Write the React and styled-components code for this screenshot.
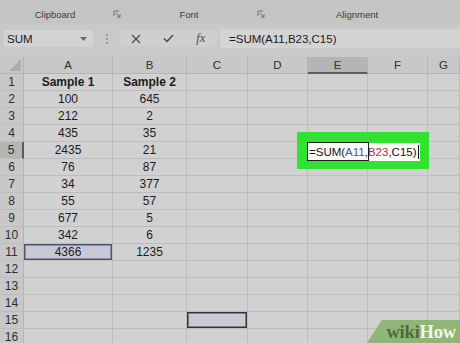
import React from "react";
import styled, { createGlobalStyle, css } from "styled-components";

const GlobalStyle = createGlobalStyle`
  html, body { margin: 0; padding: 0; background: #c9c9c9; }
  body { font-family: "Liberation Sans", Arial, sans-serif; }
  * { box-sizing: border-box; }
`;

const Page = styled.div`
  position: relative;
  width: 460px;
  height: 343px;
  overflow: hidden;
  background: #c9c9c9;
  color: #1e1e1e;
`;

const Ribbon = styled.div`
  display: flex;
  height: 24px;
  background: #c5c5c5;
`;

const RibbonGroup = styled.div`
  display: flex;
  align-items: center;
  width: ${(p) => p.$w}px;
  flex: ${(p) => (p.$grow ? 1 : "none")};
  padding-top: 4px;
`;

const GroupLabel = styled.span`
  flex: 1;
  text-align: center;
  font-size: 9.5px;
  color: #3c3c3c;
`;

const LauncherBox = styled.span`
  width: 14px;
  display: flex;
  justify-content: center;
`;

const Launcher = () => (
  <LauncherBox>
    <svg width="8" height="8" viewBox="0 0 8 8" fill="none" stroke="#6a6a6a" strokeWidth="1">
      <path d="M1 6V1H6" />
      <path d="M3 3L6.8 6.8" />
      <path d="M7 4V7H4" />
    </svg>
  </LauncherBox>
);

const FormulaBar = styled.div`
  display: flex;
  align-items: center;
  height: 33px;
  padding: 6px 0 10px 4px;
`;

const NameBox = styled.div`
  width: 89px;
  height: 17px;
  display: flex;
  align-items: center;
  justify-content: space-between;
  padding: 0 6px 0 3px;
  background: #d3d3d3;
  font-size: 11.5px;
  color: #1a1a1a;
`;

const Grip = styled.div`
  width: 27px;
  display: flex;
  flex-direction: column;
  align-items: center;
  gap: 2px;
  & > i {
    display: block;
    width: 2px;
    height: 2px;
    background: #9c9c9c;
  }
`;

const FuncBox = styled.div`
  width: 97px;
  height: 17px;
  display: flex;
  align-items: center;
  background: #cfcfcf;
`;

const FuncSlot = styled.span`
  flex: 1;
  display: flex;
  justify-content: center;
  align-items: center;
  color: #4a4a4a;
`;

const FxText = styled.span`
  font-family: "Liberation Serif", "Times New Roman", serif;
  font-style: italic;
  font-size: 12.5px;
  color: #4a4a4a;
`;

const FormulaInput = styled.div`
  flex: 1;
  height: 19px;
  margin-left: 3px;
  padding-left: 9px;
  display: flex;
  align-items: center;
  background: #d4d4d4;
  font-size: 11.5px;
  color: #1a1a1a;
`;

const Sheet = styled.div`
  display: grid;
  grid-template-columns: 24px 89px 74px 61px 60px 60px 60px 1fr;
  grid-auto-rows: 17px;
`;

const Corner = styled.div`
  position: relative;
  background: #c8c8c8;
  border-right: 1px solid #b4b4b4;
  border-bottom: 1px solid #b4b4b4;
  &::after {
    content: "";
    position: absolute;
    right: 2px;
    bottom: 2px;
    width: 0;
    height: 0;
    border-left: 12px solid transparent;
    border-bottom: 12px solid #adadad;
  }
`;

const ColHeader = styled.div`
  display: flex;
  align-items: center;
  justify-content: center;
  font-size: 11.5px;
  color: #2e2e2e;
  background: #c8c8c8;
  border-right: 1px solid #b6b6b6;
  border-bottom: 1px solid #b4b4b4;
  ${(p) =>
    p.$active &&
    css`
      background: #b5b5b5;
      border-bottom: 2px solid #55605a;
    `}
`;

const RowHeader = styled.div`
  display: flex;
  align-items: center;
  justify-content: center;
  font-size: 12px;
  color: #2e2e2e;
  background: #c8c8c8;
  border-right: 1px solid #b4b4b4;
  border-bottom: 1px solid #bdbdbd;
  ${(p) =>
    p.$active &&
    css`
      background: #b5b5b5;
      border-right: 2px solid #55605a;
    `}
`;

const refStyles = {
  blue: css`
    background: #c7c9d6;
    box-shadow: inset 0 0 0 1.5px #4e5372;
  `,
  purple: css`
    background: #ccc9d3;
    box-shadow: inset 0 0 0 1.5px #34303f;
  `,
};

const Cell = styled.div`
  position: relative;
  display: flex;
  align-items: center;
  justify-content: center;
  font-size: 12px;
  font-weight: ${(p) => (p.$bold ? 700 : 400)};
  color: #1c1c1c;
  background: #d1d1d1;
  border-right: 1px solid #bebebe;
  border-bottom: 1px solid #bebebe;
  ${(p) => p.$ref && refStyles[p.$ref]}
  ${(p) => p.$editing && css`z-index: 2;`}
`;

const GreenFrame = styled.div`
  position: absolute;
  left: -11px;
  top: -10px;
  width: 132px;
  height: 37px;
  background: #33e133;
  z-index: 1;
`;

const EditBox = styled.div`
  position: absolute;
  left: -1px;
  top: 1px;
  width: 113px;
  height: 18px;
  padding-left: 2px;
  display: flex;
  align-items: center;
  background: #fbfbfb;
  font-size: 11.5px;
  font-weight: 400;
  color: #151515;
  white-space: nowrap;
  z-index: 2;
`;

const Caret = styled.span`
  display: inline-block;
  width: 1px;
  height: 14px;
  margin-left: 1px;
  background: #111;
`;

const ActiveBorder = styled.div`
  position: absolute;
  left: -1px;
  top: 0px;
  width: 62px;
  height: 19px;
  border: 1.5px solid #1c1c1c;
  z-index: 3;
`;

const Ref = styled.span`
  color: ${(p) => p.$c};
`;

const Watermark = styled.div`
  position: absolute;
  right: 0;
  bottom: 0;
  width: 93px;
  height: 23px;
  background: #8fb676;
  clip-path: polygon(16% 0, 100% 0, 100% 100%, 0 100%);
  display: flex;
  align-items: center;
  justify-content: flex-end;
  padding-right: 4px;
  padding-top: 2px;
  font-family: "Liberation Serif", "Times New Roman", serif;
  font-weight: 700;
  font-size: 18.5px;
  letter-spacing: -0.2px;
`;

const WmDark = styled.span`
  color: #4d6b3c;
`;

const WmLight = styled.span`
  color: #f4f7f0;
`;

const columns = ["A", "B", "C", "D", "E", "F", "G"];
const data = [
  ["Sample 1", "Sample 2"],
  ["100", "645"],
  ["212", "2"],
  ["435", "35"],
  ["2435", "21"],
  ["76", "87"],
  ["34", "377"],
  ["55", "57"],
  ["677", "5"],
  ["342", "6"],
  ["4366", "1235"],
];

export default function App() {
  const rows = Array.from({ length: 16 }, (_, i) => i + 1);
  return (
    <Page>
      <GlobalStyle />
      <Ribbon>
        <RibbonGroup $w={124}>
          <GroupLabel>Clipboard</GroupLabel>
          <Launcher />
        </RibbonGroup>
        <RibbonGroup $w={144}>
          <GroupLabel>Font</GroupLabel>
          <Launcher />
        </RibbonGroup>
        <RibbonGroup $grow>
          <GroupLabel>Alignment</GroupLabel>
          <LauncherBox />
        </RibbonGroup>
      </Ribbon>

      <FormulaBar>
        <NameBox>
          <span>SUM</span>
          <svg width="7" height="4" viewBox="0 0 7 4">
            <path d="M0 0H7L3.5 4Z" fill="#6a6a6a" />
          </svg>
        </NameBox>
        <Grip>
          <i />
          <i />
          <i />
        </Grip>
        <FuncBox>
          <FuncSlot>
            <svg width="10" height="10" viewBox="0 0 10 10" stroke="#4a4a4a" strokeWidth="1.2">
              <path d="M1 1L9 9M9 1L1 9" />
            </svg>
          </FuncSlot>
          <FuncSlot>
            <svg width="11" height="9" viewBox="0 0 11 9" fill="none" stroke="#4a4a4a" strokeWidth="1.5">
              <path d="M1 4.5L4 7.5L10 1" />
            </svg>
          </FuncSlot>
          <FuncSlot>
            <FxText>fx</FxText>
          </FuncSlot>
        </FuncBox>
        <FormulaInput>=SUM(A11,B23,C15)</FormulaInput>
      </FormulaBar>

      <Sheet>
        <Corner />
        {columns.map((c) => (
          <ColHeader key={c} $active={c === "E"}>
            {c}
          </ColHeader>
        ))}
        {rows.map((r) => {
          const vals = data[r - 1] || [];
          return (
            <React.Fragment key={r}>
              <RowHeader $active={r === 5}>{r}</RowHeader>
              {columns.map((c, ci) => {
                const isEdit = r === 5 && c === "E";
                let ref;
                if (r === 11 && c === "A") ref = "blue";
                if (r === 15 && c === "C") ref = "purple";
                return (
                  <Cell key={c} $bold={r === 1} $ref={ref} $editing={isEdit}>
                    {vals[ci] || ""}
                    {isEdit && (
                      <>
                        <GreenFrame />
                        <EditBox>
                          =SUM(<Ref $c="#3c56a6">A11</Ref>,<Ref $c="#b1303f">B23</Ref>,C15)
                          <Caret />
                        </EditBox>
                        <ActiveBorder />
                      </>
                    )}
                  </Cell>
                );
              })}
            </React.Fragment>
          );
        })}
      </Sheet>

      <Watermark>
        <WmDark>wiki</WmDark>
        <WmLight>How</WmLight>
      </Watermark>
    </Page>
  );
}
